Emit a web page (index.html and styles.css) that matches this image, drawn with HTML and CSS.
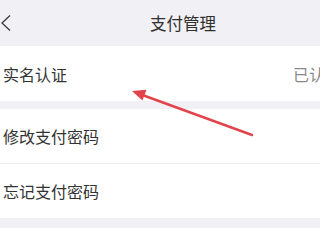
FILE: index.html
```html
<!DOCTYPE html>
<html lang="zh">
<head>
<meta charset="utf-8">
<link rel="stylesheet" href="styles.css">
</head>
<body>
<div class="page">
  <header class="nav">
    <svg class="back" width="12" height="18" viewBox="0 0 12 18"><path d="M10 1.5 L2 9 L10 16.5" fill="none" stroke="#3a3a3a" stroke-width="1.3"/></svg>
    <div class="title">支付管理</div>
  </header>
  <div class="group">
    <div class="row first">
      <span class="label">实名认证</span>
      <span class="value">已认证</span>
    </div>
  </div>
  <div class="group">
    <div class="row second">
      <span class="label">修改支付密码</span>
    </div>
    <div class="row third">
      <span class="label">忘记支付密码</span>
    </div>
  </div>
  <div class="rest"></div>
  <svg class="arrow" width="320" height="240" viewBox="0 0 320 240">
    <line x1="252" y1="135" x2="141" y2="94.5" stroke="#e2444b" stroke-width="2.4" stroke-linecap="round"/>
    <polygon points="132,91 146.5,89.8 142.4,100.5" fill="#e2444b"/>
  </svg>
</div>
</body>
</html>
```
FILE: styles.css
```css
html, body {
  margin: 0;
  padding: 0;
  background: #ffffff;
}
.page {
  position: relative;
  width: 320px;
  height: 240px;
  overflow: hidden;
  display: flex;
  flex-direction: column;
  background: #f1f0f4;
  font-family: "Noto Sans CJK SC", "Noto Sans", sans-serif;
  color: #333333;
}
.nav {
  flex: 0 0 46px;
  display: flex;
  align-items: center;
}
.back {
  display: block;
}
.title {
  margin-left: 138px;
  font-size: 16.5px;
  line-height: 20px;
  color: #2f2f2f;
}
.group {
  background: #ffffff;
}
.group + .group {
  margin-top: 8px;
}
.row {
  display: flex;
  align-items: center;
  padding-left: 3px;
  white-space: nowrap;
  font-size: 16px;
  line-height: 20px;
}
.first {
  height: 55px;
}
.second {
  height: 54px;
  border-bottom: 1px solid #ececef;
}
.third {
  height: 54px;
}
.first .label {
  flex: 0 0 290px;
}
.label {
  color: #333333;
}
.value {
  color: #8a8a8a;
}
.rest {
  flex: 1;
  margin-top: 10px;
  background: #ffffff;
}
.arrow {
  position: absolute;
  left: 0;
  top: 0;
}
```
